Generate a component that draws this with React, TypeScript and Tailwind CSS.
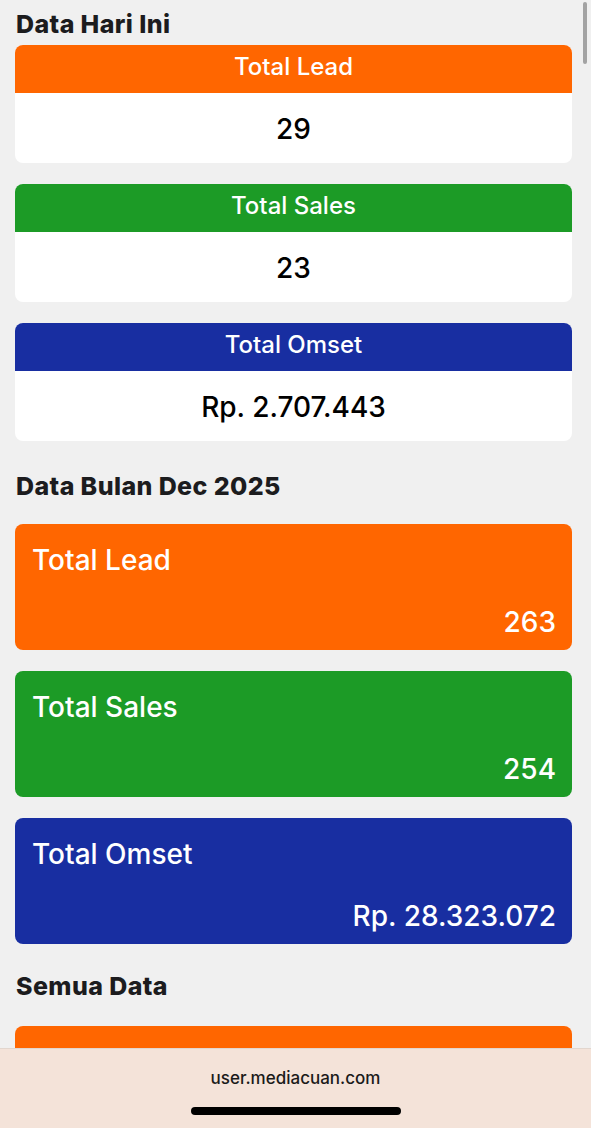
import React from "react";

const font = { fontFamily: "Inter, 'Noto Sans', Roboto, sans-serif" };

function DailyCard({ title, value, color }: { title: string; value: string; color: string }) {
  return (
    <div className="rounded-[8px] overflow-hidden bg-white">
      <div className={`h-[48px] pb-[4px] flex items-center justify-center text-white text-[24px] font-medium ${color}`}>
        {title}
      </div>
      <div className="h-[70px] pt-[2px] flex items-center justify-center text-black text-[28px] font-medium">
        {value}
      </div>
    </div>
  );
}

function MonthCard({ title, value, color }: { title: string; value: string; color: string }) {
  return (
    <div className={`h-[126px] rounded-[8px] flex flex-col justify-between pl-[17px] pr-[16px] pt-[20px] pb-[12px] text-white ${color}`}>
      <div className="text-[28px] leading-[32px] font-medium">{title}</div>
      <div className="text-[28px] leading-[32px] font-medium text-right">{value}</div>
    </div>
  );
}

export default function App() {
  return (
    <div className="relative h-[1128px] w-[591px] overflow-hidden bg-[#f0f0f0]" style={font}>
      <div className="pl-[15px] pr-[19px] pt-[8px]">
        <h2 className="h-[32px] leading-[32px] text-[25px] tracking-[0.4px] font-extrabold text-[#1c1c1e] pl-[1px]">Data Hari Ini</h2>
        <div className="mt-[5px] flex flex-col gap-[21px]">
          <DailyCard title="Total Lead" value="29" color="bg-[#ff6600]" />
          <DailyCard title="Total Sales" value="23" color="bg-[#1c9b26]" />
          <DailyCard title="Total Omset" value="Rp. 2.707.443" color="bg-[#182ea1]" />
        </div>
        <h2 className="mt-[29px] h-[32px] leading-[32px] text-[25px] tracking-[0.4px] font-extrabold text-[#1c1c1e] pl-[1px]">Data Bulan Dec 2025</h2>
        <div className="mt-[22px] flex flex-col gap-[21px]">
          <MonthCard title="Total Lead" value="263" color="bg-[#ff6600]" />
          <MonthCard title="Total Sales" value="254" color="bg-[#1c9b26]" />
          <MonthCard title="Total Omset" value="Rp. 28.323.072" color="bg-[#182ea1]" />
        </div>
        <h2 className="mt-[26px] h-[32px] leading-[32px] text-[25px] tracking-[0.4px] font-extrabold text-[#1c1c1e] pl-[1px]">Semua Data</h2>
        <div className="mt-[24px] h-[126px] rounded-[8px] bg-[#ff6600]" />
      </div>

      <div className="absolute right-[4px] top-[2px] w-[4px] h-[62px] rounded-full bg-[#a3a3a3]" />

      <div className="absolute left-0 right-0 bottom-0 h-[80px] bg-[#f4e3d9] border-t border-[#e2d6ce] flex flex-col items-center">
        <div className="mt-[19px] text-[17px] leading-[20px] font-medium text-[#1a1a1a]">user.mediacuan.com</div>
        <div className="mt-[19px] w-[210px] h-[8px] rounded-full bg-black" />
      </div>
    </div>
  );
}
